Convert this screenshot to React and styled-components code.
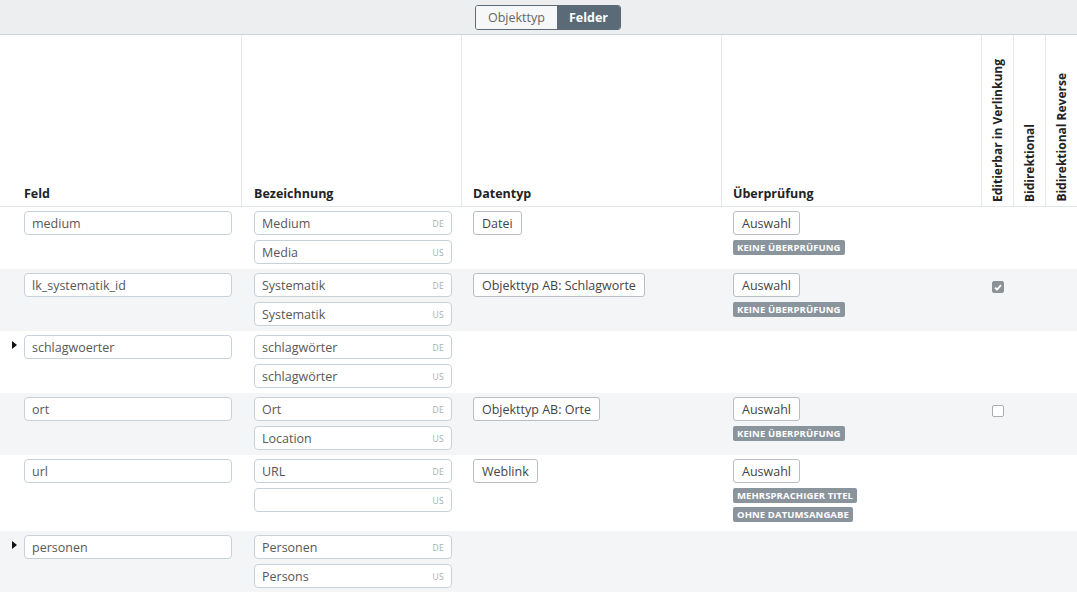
import React from 'react'
import styled, { createGlobalStyle } from 'styled-components'

const GlobalStyle = createGlobalStyle`
  html, body {
    margin: 0;
    padding: 0;
    background: #fff;
  }
  body {
    font-family: "Open Sans", "Liberation Sans", sans-serif;
    font-size: 12.5px;
    color: #333;
  }
`

const COLUMNS = '242px 220px 260px 260px 32px 32px 31px'

const Page = styled.div`
  width: 1077px;
  height: 592px;
  overflow: hidden;
`

const Toolbar = styled.div`
  height: 35px;
  background: #edeef0;
  border-bottom: 1px solid #c9d4db;
  display: flex;
  align-items: center;
  justify-content: center;
  padding-left: 19px;
  box-sizing: border-box;
`

const Segmented = styled.div`
  display: flex;
  border: 1px solid #5c6b77;
  border-radius: 3px;
  overflow: hidden;
  height: 25px;
  box-sizing: border-box;
`

const SegButton = styled.button`
  border: none;
  margin: 0;
  font-family: inherit;
  font-size: 12.5px;
  font-weight: ${props => (props.active ? 700 : 400)};
  background: ${props => (props.active ? '#5a6a77' : '#f6f7f8')};
  color: ${props => (props.active ? '#fff' : '#666')};
  padding: 0 ${props => (props.active ? '12px' : '12px')};
  line-height: 23px;
`

const HeaderRow = styled.div`
  display: grid;
  grid-template-columns: ${COLUMNS};
  height: 172px;
  border-bottom: 1px solid #e2e6e9;
  box-sizing: border-box;
`

const HeadCell = styled.div`
  display: flex;
  align-items: flex-end;
  padding: 0 0 4px ${props => props.pad || '11px'};
  border-right: 1px solid #e6e9ec;
  font-weight: 700;
  color: #222;
  font-size: 12.5px;
  &:last-child {
    border-right: none;
  }
`

const VerticalHead = styled.div`
  display: flex;
  align-items: flex-end;
  justify-content: center;
  padding-bottom: 4px;
  border-right: 1px solid #e6e9ec;
  &:last-child {
    border-right: none;
  }
  span {
    writing-mode: vertical-rl;
    transform: rotate(180deg);
    font-weight: 700;
    font-size: 12px;
    color: #222;
    white-space: nowrap;
  }
`

const Row = styled.div`
  display: grid;
  grid-template-columns: ${COLUMNS};
  background: ${props => (props.shaded ? '#f4f5f7' : '#fff')};
  min-height: ${props => props.h || 62}px;
  box-sizing: border-box;
`

const Cell = styled.div`
  position: relative;
  display: flex;
  flex-direction: column;
  align-items: flex-start;
  gap: 5px;
  padding: 4px 10px 4px ${props => props.pad || '11px'};
`

const Caret = styled.span`
  position: absolute;
  left: 12px;
  top: 10px;
  width: 0;
  height: 0;
  border-top: 4px solid transparent;
  border-bottom: 4px solid transparent;
  border-left: 5px solid #111;
`

const Field = styled.div`
  width: ${props => props.w || '208px'};
  height: 24px;
  box-sizing: border-box;
  border: 1px solid #c9d1d8;
  border-radius: 4px;
  background: #fff;
  display: flex;
  align-items: center;
  padding: 0 7px;
  color: #585858;
  font-size: 12.5px;
`

const FieldText = styled.span`
  flex: 1;
`

const Lang = styled.span`
  font-size: 8.5px;
  color: #a9adb1;
  letter-spacing: 0.3px;
`

const TypeButton = styled.div`
  height: 24px;
  box-sizing: border-box;
  border: 1px solid #b8bec4;
  border-radius: 3px;
  background: #fff;
  padding: 0 8px;
  display: flex;
  align-items: center;
  color: #444;
  font-size: 12.5px;
`

const Badges = styled.div`
  display: flex;
  flex-direction: column;
  align-items: flex-start;
  gap: 4px;
  margin-top: 0;
`

const Badge = styled.span`
  background: #8a949c;
  color: #fff;
  font-size: 9.5px;
  font-weight: 700;
  line-height: 15px;
  padding: 0 4px;
  border-radius: 2px;
  letter-spacing: 0.1px;
`

const CheckCell = styled.div`
  display: flex;
  justify-content: center;
  padding-top: 12px;
`

const Check = styled.span`
  width: 12px;
  height: 12px;
  box-sizing: border-box;
  border-radius: 2px;
  border: 1px solid ${props => (props.checked ? '#8d9297' : '#a8adb2')};
  background: ${props => (props.checked ? '#8d9297' : '#fff')};
  display: flex;
  align-items: center;
  justify-content: center;
`

const rows = [
  {
    name: 'medium',
    de: 'Medium',
    us: 'Media',
    type: 'Datei',
    badges: ['Keine Überprüfung'],
  },
  {
    name: 'lk_systematik_id',
    de: 'Systematik',
    us: 'Systematik',
    type: 'Objekttyp AB: Schlagworte',
    badges: ['Keine Überprüfung'],
    check: true,
  },
  { name: 'schlagwoerter', de: 'schlagwörter', us: 'schlagwörter', caret: true },
  {
    name: 'ort',
    de: 'Ort',
    us: 'Location',
    type: 'Objekttyp AB: Orte',
    badges: ['Keine Überprüfung'],
    check: false,
  },
  {
    name: 'url',
    de: 'URL',
    us: '',
    type: 'Weblink',
    badges: ['Mehrsprachiger Titel', 'Ohne Datumsangabe'],
    h: 76,
  },
  { name: 'personen', de: 'Personen', us: 'Persons', caret: true },
]

const LangField = ({ value, lang }) => (
  <Field w="198px">
    <FieldText>{value}</FieldText>
    <Lang>{lang}</Lang>
  </Field>
)

export default function App() {
  return (
    <Page>
      <GlobalStyle />
      <Toolbar>
        <Segmented>
          <SegButton>Objekttyp</SegButton>
          <SegButton active>Felder</SegButton>
        </Segmented>
      </Toolbar>
      <HeaderRow>
        <HeadCell pad="24px">Feld</HeadCell>
        <HeadCell pad="12px">Bezeichnung</HeadCell>
        <HeadCell>Datentyp</HeadCell>
        <HeadCell>Überprüfung</HeadCell>
        <VerticalHead>
          <span>Editierbar in Verlinkung</span>
        </VerticalHead>
        <VerticalHead>
          <span>Bidirektional</span>
        </VerticalHead>
        <VerticalHead>
          <span>Bidirektional Reverse</span>
        </VerticalHead>
      </HeaderRow>
      {rows.map((row, i) => (
        <Row key={row.name} shaded={i % 2 === 1} h={row.h}>
          <Cell pad="24px">
            {row.caret && <Caret />}
            <Field>{row.name}</Field>
          </Cell>
          <Cell pad="12px">
            <LangField value={row.de} lang="DE" />
            <LangField value={row.us} lang="US" />
          </Cell>
          <Cell>{row.type && <TypeButton>{row.type}</TypeButton>}</Cell>
          <Cell>
            {row.badges && (
              <>
                <TypeButton>Auswahl</TypeButton>
                <Badges>
                  {row.badges.map(b => (
                    <Badge key={b}>{b.toUpperCase()}</Badge>
                  ))}
                </Badges>
              </>
            )}
          </Cell>
          <CheckCell>
            {row.check !== undefined && (
              <Check checked={row.check}>
                {row.check && (
                  <svg width="8" height="7" viewBox="0 0 8 7">
                    <path
                      d="M1 3.6 L3 5.6 L7 1.2"
                      stroke="#fff"
                      strokeWidth="1.8"
                      fill="none"
                    />
                  </svg>
                )}
              </Check>
            )}
          </CheckCell>
          <div />
          <div />
        </Row>
      ))}
    </Page>
  )
}
